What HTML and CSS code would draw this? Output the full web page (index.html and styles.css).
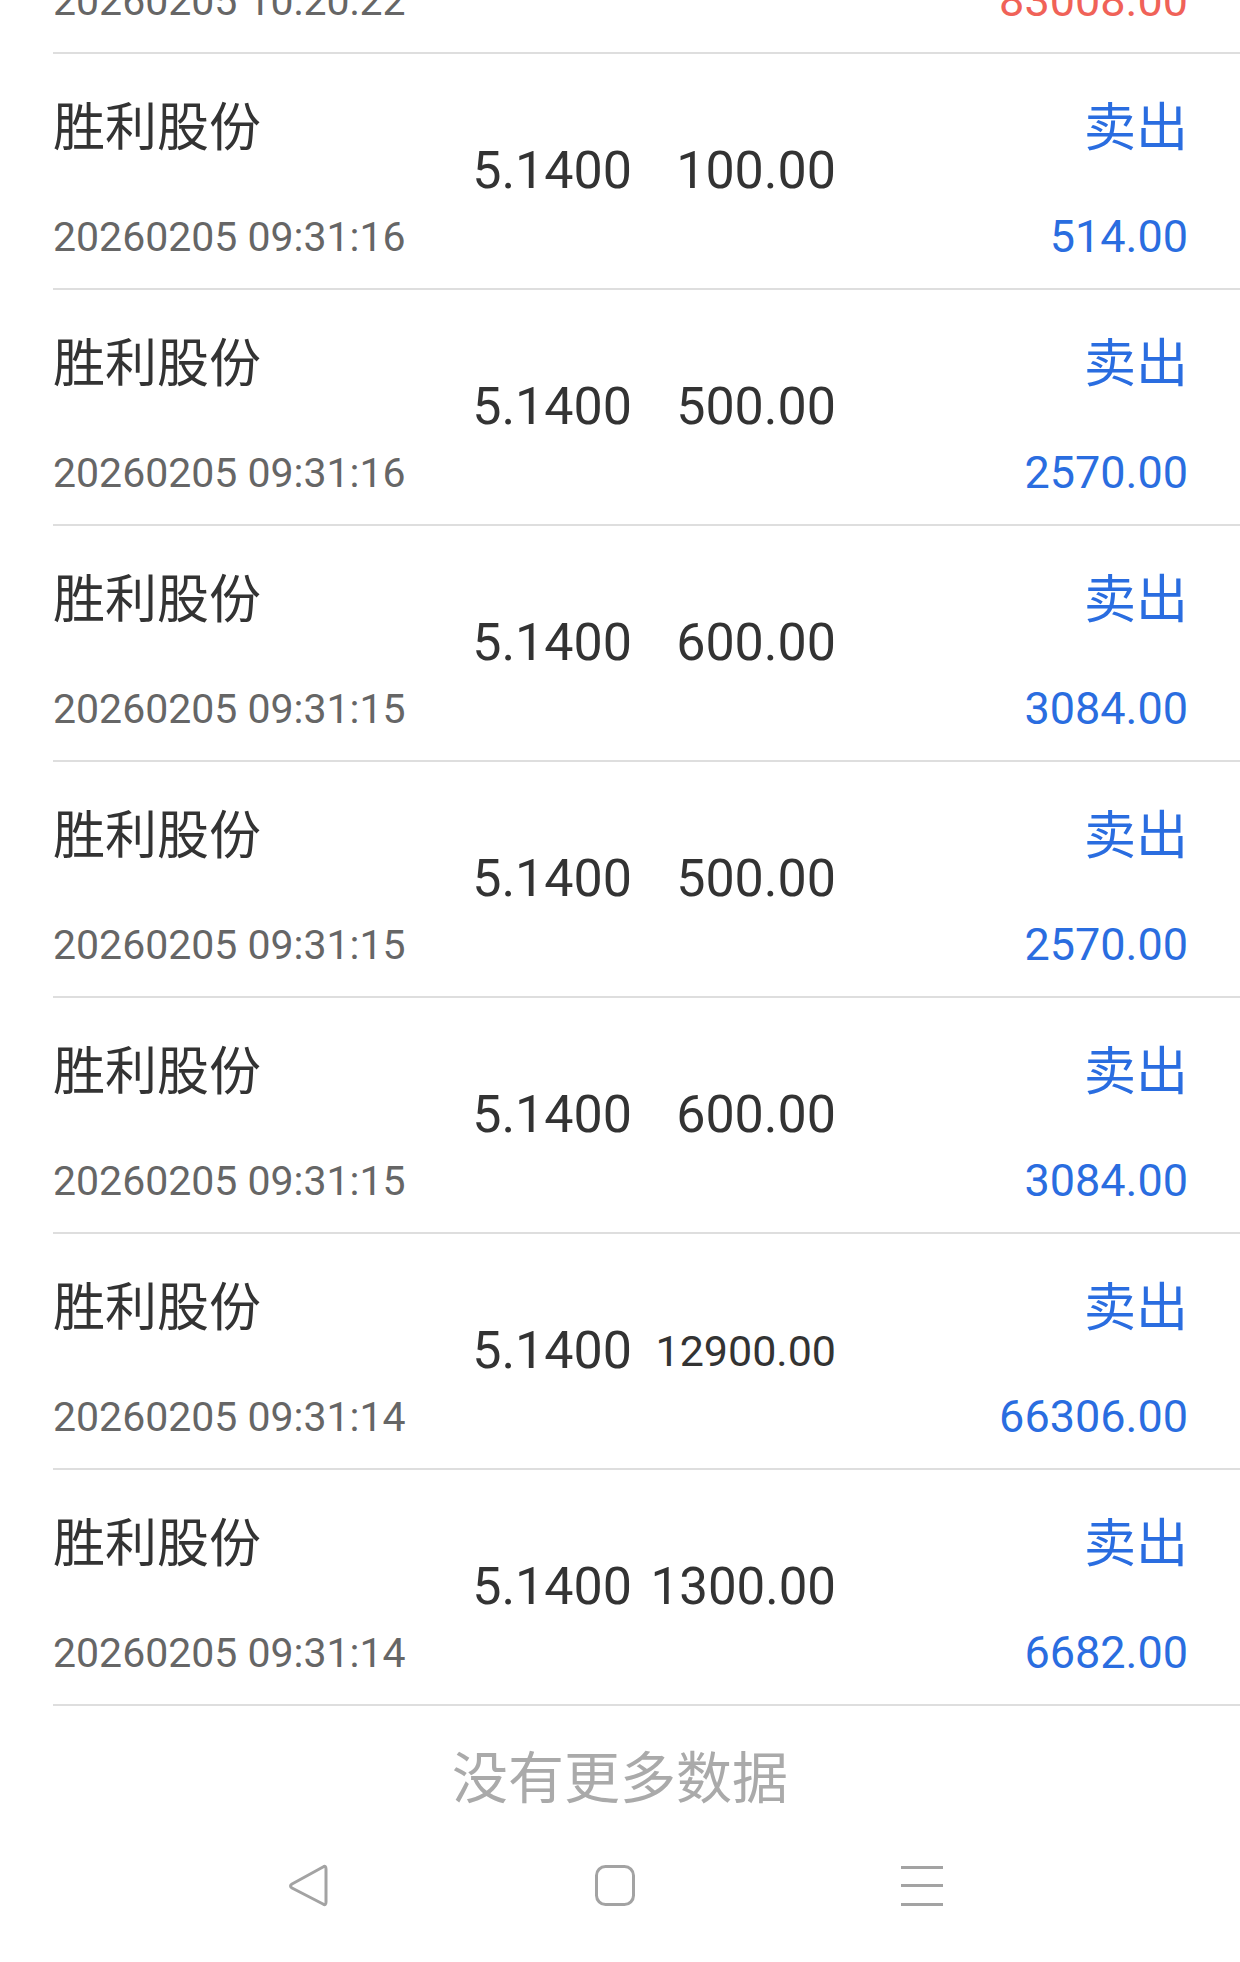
FILE: index.html
```html
<!DOCTYPE html>
<html lang="zh-CN">
<head>
    <meta charset="UTF-8">
    <meta name="viewport" content="width=device-width, initial-scale=1.0">
    <title>成交查询</title>
    <link rel="stylesheet" href="styles.css">
</head>
<body>
    <!-- list is scrolled: first row only shows its bottom line -->
    <div class="deal-list">
        <div class="deal-row">
            <div class="deal-main">
                <span class="deal-name">胜利股份</span>
                <span class="deal-time">20260205 10:20:22</span>
            </div>
            <div class="deal-price">5.1800</div>
            <div class="deal-qty">16000.00</div>
            <div class="deal-side buy">
                <span class="deal-dir">买入</span>
                <span class="deal-amount">83008.00</span>
            </div>
        </div>
        <div class="deal-row">
            <div class="deal-main">
                <span class="deal-name">胜利股份</span>
                <span class="deal-time">20260205 09:31:16</span>
            </div>
            <div class="deal-price">5.1400</div>
            <div class="deal-qty">100.00</div>
            <div class="deal-side sell">
                <span class="deal-dir">卖出</span>
                <span class="deal-amount">514.00</span>
            </div>
        </div>
        <div class="deal-row">
            <div class="deal-main">
                <span class="deal-name">胜利股份</span>
                <span class="deal-time">20260205 09:31:16</span>
            </div>
            <div class="deal-price">5.1400</div>
            <div class="deal-qty">500.00</div>
            <div class="deal-side sell">
                <span class="deal-dir">卖出</span>
                <span class="deal-amount">2570.00</span>
            </div>
        </div>
        <div class="deal-row">
            <div class="deal-main">
                <span class="deal-name">胜利股份</span>
                <span class="deal-time">20260205 09:31:15</span>
            </div>
            <div class="deal-price">5.1400</div>
            <div class="deal-qty">600.00</div>
            <div class="deal-side sell">
                <span class="deal-dir">卖出</span>
                <span class="deal-amount">3084.00</span>
            </div>
        </div>
        <div class="deal-row">
            <div class="deal-main">
                <span class="deal-name">胜利股份</span>
                <span class="deal-time">20260205 09:31:15</span>
            </div>
            <div class="deal-price">5.1400</div>
            <div class="deal-qty">500.00</div>
            <div class="deal-side sell">
                <span class="deal-dir">卖出</span>
                <span class="deal-amount">2570.00</span>
            </div>
        </div>
        <div class="deal-row">
            <div class="deal-main">
                <span class="deal-name">胜利股份</span>
                <span class="deal-time">20260205 09:31:15</span>
            </div>
            <div class="deal-price">5.1400</div>
            <div class="deal-qty">600.00</div>
            <div class="deal-side sell">
                <span class="deal-dir">卖出</span>
                <span class="deal-amount">3084.00</span>
            </div>
        </div>
        <div class="deal-row">
            <div class="deal-main">
                <span class="deal-name">胜利股份</span>
                <span class="deal-time">20260205 09:31:14</span>
            </div>
            <div class="deal-price">5.1400</div>
            <div class="deal-qty smaller">12900.00</div>
            <div class="deal-side sell">
                <span class="deal-dir">卖出</span>
                <span class="deal-amount">66306.00</span>
            </div>
        </div>
        <div class="deal-row">
            <div class="deal-main">
                <span class="deal-name">胜利股份</span>
                <span class="deal-time">20260205 09:31:14</span>
            </div>
            <div class="deal-price">5.1400</div>
            <div class="deal-qty small">1300.00</div>
            <div class="deal-side sell">
                <span class="deal-dir">卖出</span>
                <span class="deal-amount">6682.00</span>
            </div>
        </div>
    </div>

    <div class="no-more">没有更多数据</div>

    <!-- system navigation bar -->
    <div class="nav-bar">
        <svg class="nav-icon" viewBox="0 0 44 44" width="44" height="44">
            <path d="M40 5 L40 38 Q40 42 37 40 L6 24 Q3 22 6 20 L37 3 Q40 1 40 5 Z" fill="none" stroke="#a3a3a3" stroke-width="3" stroke-linejoin="round"/>
        </svg>
        <svg class="nav-icon" viewBox="0 0 44 44" width="44" height="44">
            <rect x="3.5" y="2.5" width="37" height="38" rx="9" fill="none" stroke="#a3a3a3" stroke-width="3"/>
        </svg>
        <svg class="nav-icon" viewBox="0 0 44 44" width="44" height="44">
            <rect x="1" y="2" width="42" height="3" fill="#a3a3a3"/>
            <rect x="1" y="20" width="42" height="3" fill="#a3a3a3"/>
            <rect x="1" y="39" width="42" height="3" fill="#a3a3a3"/>
        </svg>
    </div>
</body>
</html>
```

FILE: styles.css
```css
body {
    margin: 0;
    background-color: #fff;
    font-family: Roboto, "Noto Sans CJK SC", sans-serif;
    color: #333;
}
.deal-list {
    margin-top: -182px;
}
.deal-row {
    display: grid;
    grid-template-columns: 407px 172px 204px 1fr;
    height: 234px;
    margin-left: 53px;
    padding-right: 52px;
    border-bottom: 2px solid #dedede;
}
.deal-main,
.deal-side {
    display: flex;
    flex-direction: column;
    gap: 54px;
    padding-top: 45px;
}
.deal-side {
    align-items: flex-end;
}
.deal-name,
.deal-dir {
    font-size: 52px;
    line-height: 60px;
}
.deal-time {
    font-size: 41px;
    line-height: 48px;
    color: #666;
}
.deal-amount {
    font-size: 45px;
    line-height: 48px;
}
.deal-price,
.deal-qty {
    align-self: center;
    text-align: right;
    font-size: 52px;
    line-height: 60px;
}
.deal-qty.small {
    font-size: 51px;
}
.deal-qty.smaller {
    font-size: 43px;
}
.sell {
    color: #2a6de0;
}
.buy {
    color: #f06258;
}
.no-more {
    padding-top: 33px;
    text-align: center;
    font-size: 56px;
    line-height: 80px;
    color: #aaa;
}
.nav-bar {
    display: flex;
    justify-content: center;
    gap: 263px;
    padding-top: 45px;
    padding-right: 10px;
}
.nav-icon {
    display: block;
}
```
